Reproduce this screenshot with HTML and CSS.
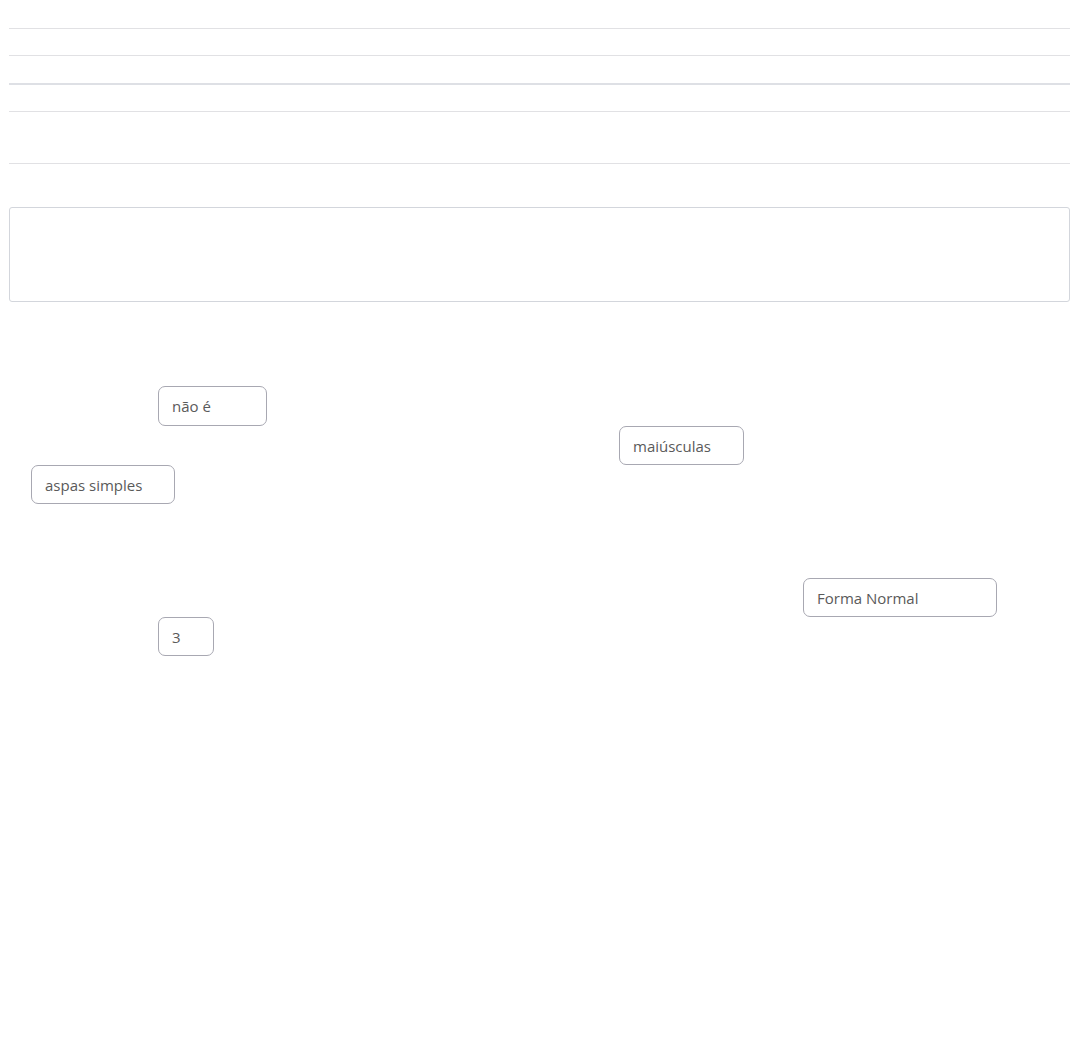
FILE: index.html
```html
<!DOCTYPE html>
<html lang="pt">
<head>
  <meta charset="UTF-8" />
  <meta name="viewport" content="width=device-width, initial-scale=1" />
  <title>Arrastar respostas</title>
  <link rel="stylesheet" href="styles.css">
</head>
<body>
  <div class="sheet">
    <div class="rule"></div>
    <div class="rule"></div>
    <div class="rule thick"></div>
    <div class="rule"></div>
    <div class="rule tall"></div>
    <div class="dropZone"></div>
    <div id="pool">
      <div class="chip" style="left:149px; top:84px; width:109px; height:40px;">não é</div>
      <div class="chip" style="left:610px; top:124px; width:125px;">maiúsculas</div>
      <div class="chip" style="left:22px; top:163px; width:144px;">aspas simples</div>
      <div class="chip" style="left:794px; top:276px; width:194px;">Forma Normal</div>
      <div class="chip" style="left:149px; top:315px; width:56px;">3</div>
    </div>
  </div>
</body>
</html>
```

FILE: styles.css
```css
* { box-sizing: border-box; }
body {
  margin: 0;
  background: #fff;
  font-family: 'Open Sans', 'Noto Sans', sans-serif;
  color: #5a5a5a;
}
.sheet {
  margin: 0 8px 0 9px;
}
.rule {
  height: 27px;
  border-bottom: 1px solid #e1e1e4;
}
.rule:first-child { height: 29px; }
.rule.thick {
  height: 29px;
  border-bottom: 2px solid #dee0e5;
}
.rule.tall { height: 52px; }
.dropZone {
  margin-top: 43px;
  height: 95px;
  border: 1px solid #d3d6dc;
  border-radius: 3px;
}
#pool {
  position: relative;
  height: 700px;
}
.chip {
  position: absolute;
  height: 39px;
  padding: 0 13px;
  display: flex;
  align-items: center;
  font-size: 15px;
  color: #5a5a5a;
  background: #fff;
  border: 1px solid #a8a8b2;
  border-radius: 7px;
  white-space: nowrap;
  cursor: grab;
}
```
